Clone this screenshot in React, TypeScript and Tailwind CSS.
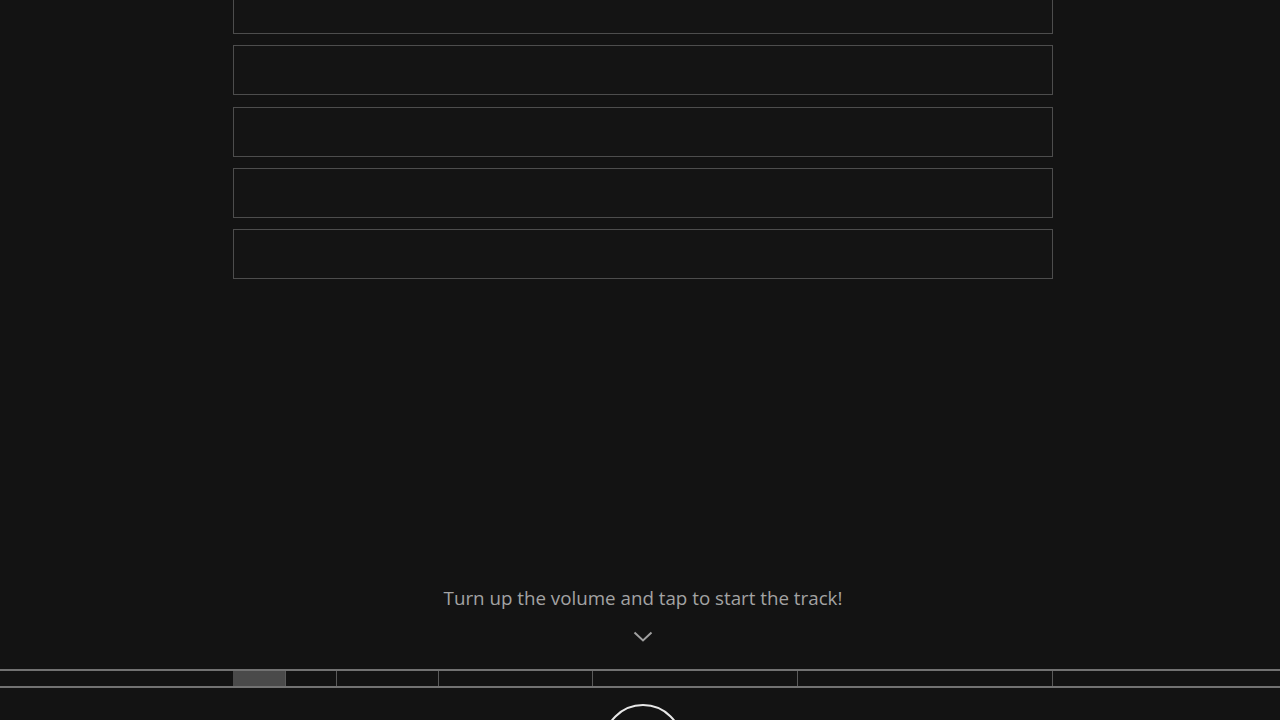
const ROWS = [0, 1, 2, 3, 4];

const SEGMENTS = [
  { w: 'w-[51px]' },
  { w: 'w-[102px]' },
  { w: 'w-[154px]' },
  { w: 'w-[205px]' },
  { w: 'w-[255px]' },
];

export default function App() {
  return (
    <div className="flex h-screen w-full flex-col overflow-hidden bg-[#131313] font-['Open_Sans','Noto_Sans',sans-serif]">
      {/* step rows */}
      <div className="ml-[233px] mt-[-16px] flex w-[820px] shrink-0 flex-col gap-[11.3px]">
        {ROWS.map((r) => (
          <div key={r} className="h-[50px] border border-[#4d4d4d] bg-[#141414]" />
        ))}
      </div>

      <div className="flex-1" />

      <div className="flex shrink-0 flex-col items-center pl-[6px]">
        <p className="text-[18.75px] leading-[24px] text-[#a3a3a3]">Turn up the volume and tap to start the track!</p>
        <svg className="mt-[21px]" width="20" height="11" viewBox="0 0 20 11" fill="none">
          <path d="M1.5 1.5l8.5 8 8.5-8" stroke="#a0a0a0" strokeWidth="2" />
        </svg>
      </div>

      {/* timeline */}
      <div className="mt-[27px] flex h-[19px] w-full shrink-0 border-y-2 border-[#727272]">
        <div className="w-[233px] shrink-0" />
        <div className="w-[52px] shrink-0 bg-[#4a4a4a]" />
        {SEGMENTS.map((s, i) => (
          <div key={i} className={`${s.w} shrink-0 border-l border-[#5a5a5a]`} />
        ))}
        <div className="flex-1 border-l border-[#5a5a5a]" />
      </div>

      <div className="flex h-[32px] shrink-0 justify-center pl-[6px]">
        <button type="button" className="mt-[16px] h-[80px] w-[80px] shrink-0 rounded-full border-2 border-[#e8e8e8]" />
      </div>
    </div>
  );
}
